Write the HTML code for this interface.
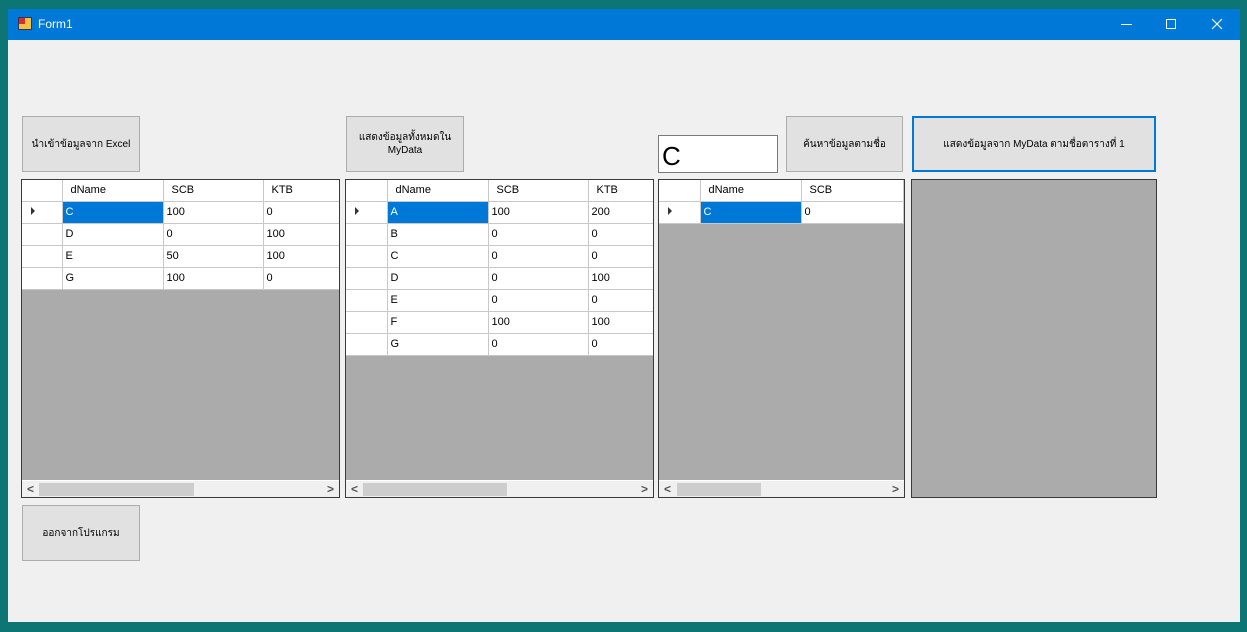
<!DOCTYPE html>
<html><head><meta charset="utf-8"><style>
*{margin:0;padding:0;box-sizing:border-box}
body{width:1247px;height:632px;background:#0e7575;position:relative;overflow:hidden;font-family:"Liberation Sans","DejaVu Sans",sans-serif;font-size:12px;color:#000}
.win{position:absolute;left:8px;top:9px;width:1232px;height:613px;background:#f0f0f0}
.title{position:absolute;left:8px;top:9px;width:1232px;height:31px;background:#0078d7;color:#fff;font-size:12px}
.btn{position:absolute;background:#e1e1e1;border:1px solid #adadad;display:flex;align-items:center;justify-content:center;text-align:center;font-size:10px;line-height:13px}
.grid{position:absolute;border:1px solid #3a3a3a;background:#ababab;overflow:hidden}
table{border-collapse:collapse;table-layout:fixed;background:#fff}
td{height:22px;border:1px solid #c8c8c8;padding:0 3px;font-size:11px;white-space:nowrap;overflow:hidden}
tr.h td{height:21px;padding-left:8px;border-top:none}
td.rh{border-left:none}
td.sel{background:#0078d7;color:#fff}
.sb{position:absolute;left:0;right:0;bottom:0;height:17px;background:#f0f0f0;border-top:1px solid #fff}
.sb .th{position:absolute;top:2px;height:13px;background:#cdcdcd}
.sb .l,.sb .r{position:absolute;top:0;font-size:12px;color:#555;font-weight:bold;line-height:16px}
.sb .l{left:5px}.sb .r{right:5px}
.arrow{display:inline-block;width:0;height:0;border-left:4px solid #333;border-top:4px solid transparent;border-bottom:4px solid transparent;margin-left:6px}
</style></head><body>
<div class="win"></div>
<div class="title">
  <div style="position:absolute;left:10px;top:8px;width:14px;height:13px;background:#f8c040;border:1px solid #335"><div style="width:6px;height:6px;background:#d03030"></div></div>
  <div style="position:absolute;left:30px;top:8px">Form1</div>
  <div style="position:absolute;left:1113px;top:15px;width:11px;height:1px;background:#fff"></div>
  <div style="position:absolute;left:1158px;top:10px;width:10px;height:10px;border:1px solid #fff"></div>
  <svg style="position:absolute;left:1203px;top:9px" width="12" height="12"><path d="M1 1L11 11M11 1L1 11" stroke="#fff" stroke-width="1.2"/></svg>
</div>

<div class="btn" style="left:22px;top:116px;width:118px;height:56px">นำเข้าข้อมูลจาก Excel</div>
<div class="btn" style="left:346px;top:116px;width:118px;height:56px">แสดงข้อมูลทั้งหมดใน<br>MyData</div>
<div style="position:absolute;left:658px;top:135px;width:120px;height:38px;background:#fff;border:1px solid #7a7a7a;font-size:26px;padding:5px 0 0 3px">C</div>
<div class="btn" style="left:786px;top:116px;width:117px;height:56px">ค้นหาข้อมูลตามชื่อ</div>
<div class="btn" style="left:912px;top:116px;width:244px;height:56px;border:2px solid #0078d7">แสดงข้อมูลจาก MyData ตามชื่อตารางที่ 1</div>
<div class="btn" style="left:22px;top:505px;width:118px;height:56px">ออกจากโปรแกรม</div>

<div class="grid" style="left:21px;top:179px;width:319px;height:319px">
<table style="width:318px"><colgroup><col style="width:40px"><col style="width:101px"><col style="width:100px"><col style="width:77px"></colgroup>
<tr class="h"><td class="rh"></td><td>dName</td><td>SCB</td><td>KTB</td></tr>
<tr><td class="rh"><span class="arrow"></span></td><td class="sel">C</td><td>100</td><td>0</td></tr>
<tr><td class="rh"></td><td>D</td><td>0</td><td>100</td></tr>
<tr><td class="rh"></td><td>E</td><td>50</td><td>100</td></tr>
<tr><td class="rh"></td><td>G</td><td>100</td><td>0</td></tr>
</table>
<div class="sb"><span class="l">&lt;</span><div class="th" style="left:17px;width:155px"></div><span class="r">&gt;</span></div>
</div>

<div class="grid" style="left:345px;top:179px;width:309px;height:319px">
<table style="width:308px"><colgroup><col style="width:41px"><col style="width:101px"><col style="width:100px"><col style="width:66px"></colgroup>
<tr class="h"><td class="rh"></td><td>dName</td><td>SCB</td><td>KTB</td></tr>
<tr><td class="rh"><span class="arrow"></span></td><td class="sel">A</td><td>100</td><td>200</td></tr>
<tr><td class="rh"></td><td>B</td><td>0</td><td>0</td></tr>
<tr><td class="rh"></td><td>C</td><td>0</td><td>0</td></tr>
<tr><td class="rh"></td><td>D</td><td>0</td><td>100</td></tr>
<tr><td class="rh"></td><td>E</td><td>0</td><td>0</td></tr>
<tr><td class="rh"></td><td>F</td><td>100</td><td>100</td></tr>
<tr><td class="rh"></td><td>G</td><td>0</td><td>0</td></tr>
</table>
<div class="sb"><span class="l">&lt;</span><div class="th" style="left:17px;width:144px"></div><span class="r">&gt;</span></div>
</div>

<div class="grid" style="left:658px;top:179px;width:247px;height:319px">
<table style="width:244px"><colgroup><col style="width:41px"><col style="width:101px"><col style="width:102px"></colgroup>
<tr class="h"><td class="rh"></td><td>dName</td><td>SCB</td></tr>
<tr><td class="rh"><span class="arrow"></span></td><td class="sel">C</td><td>0</td></tr>
</table>
<div class="sb"><span class="l">&lt;</span><div class="th" style="left:18px;width:84px"></div><span class="r">&gt;</span></div>
</div>

<div class="grid" style="left:911px;top:179px;width:246px;height:319px"></div>
</body></html>
